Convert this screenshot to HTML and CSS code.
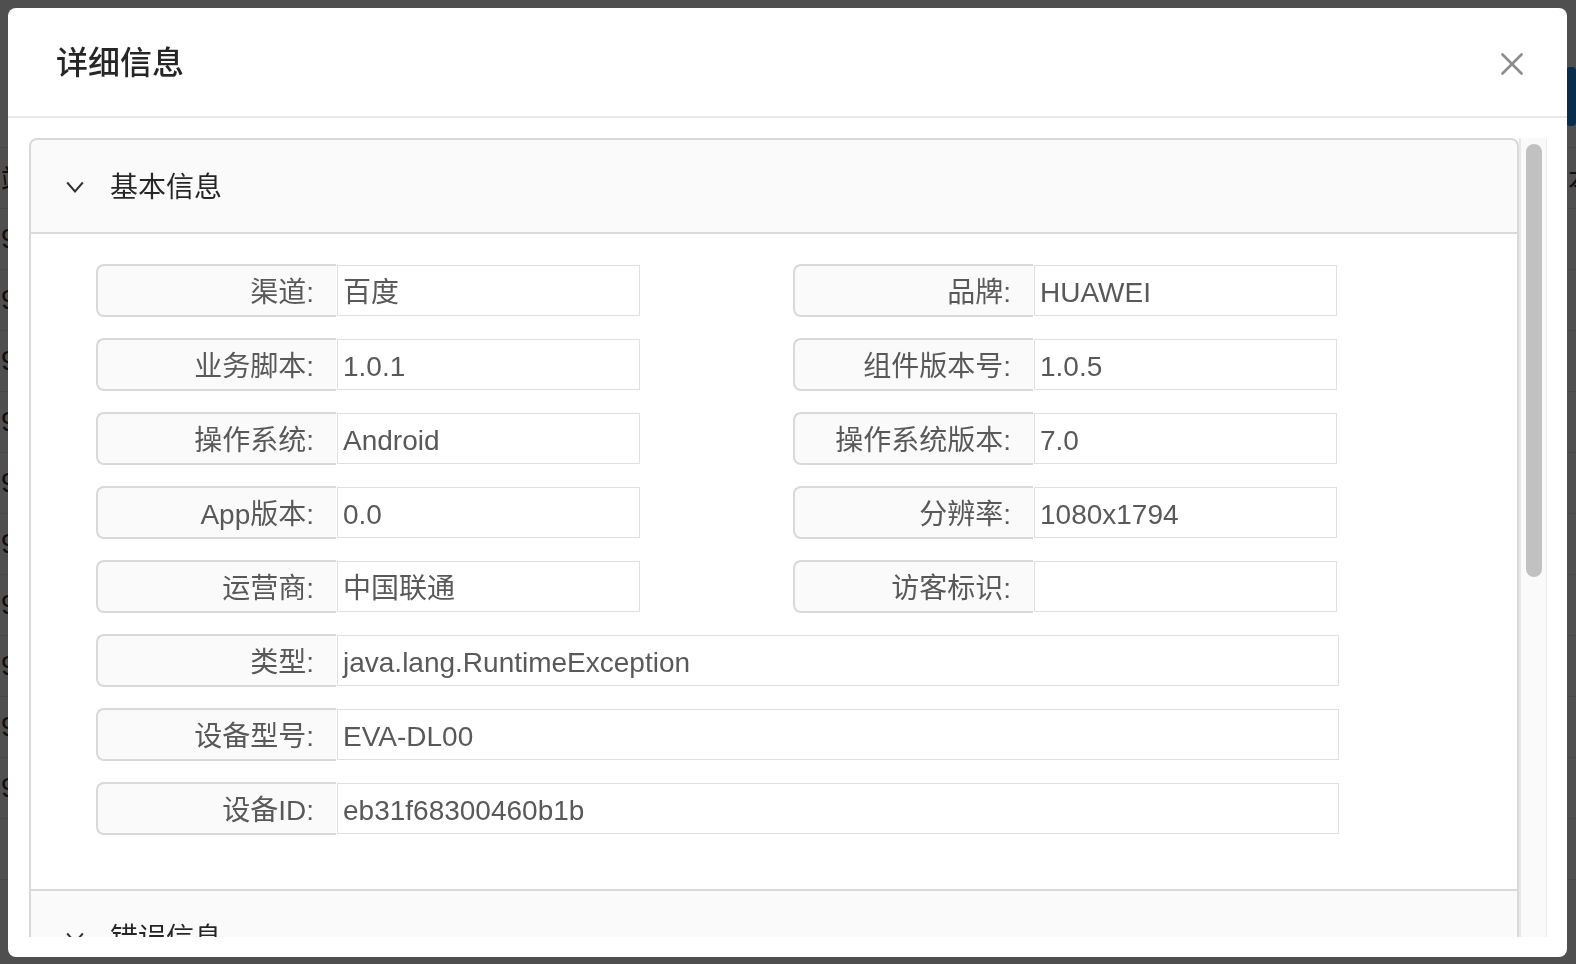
FILE: index.html
```html
<!DOCTYPE html>
<html lang="zh-CN">
<head>
<meta charset="utf-8">
<title>详细信息</title>
<link rel="stylesheet" href="styles.css">
</head>
<body>
<div class="page">
  <div class="page-toolbar"><span class="page-btn"></span></div>
  <div class="page-row"><span>端</span><span>本</span></div>
  <div class="page-row"><span>9</span><span></span></div>
  <div class="page-row"><span>9</span><span></span></div>
  <div class="page-row"><span>9</span><span></span></div>
  <div class="page-row"><span>9</span><span></span></div>
  <div class="page-row"><span>9</span><span></span></div>
  <div class="page-row"><span>9</span><span></span></div>
  <div class="page-row"><span>9</span><span></span></div>
  <div class="page-row"><span>9</span><span></span></div>
  <div class="page-row"><span>9</span><span></span></div>
  <div class="page-row"><span>9</span><span></span></div>
  <div class="page-row"><span></span><span></span></div>
</div>

<div class="mask"></div>

<div class="modal-wrap">
  <div class="modal">
    <div class="modal-header">
      <div class="modal-title">详细信息</div>
      <button class="modal-close" type="button" aria-label="关闭">
        <svg viewBox="0 0 22 22" width="22" height="22"><path d="M1.5 1.5L20.5 20.5M20.5 1.5L1.5 20.5" stroke="#8c8c8c" stroke-width="2.6" fill="none" stroke-linecap="round"/></svg>
      </button>
    </div>
    <div class="modal-body">
      <div class="scroller">
        <div class="collapse">
          <div class="collapse-item">
            <div class="collapse-header">
              <svg class="arrow" viewBox="0 0 18 12"><polyline points="1.2,1.5 9,10.5 16.8,1.5" fill="none" stroke="#333" stroke-width="2"/></svg>
              <span>基本信息</span>
            </div>
            <div class="collapse-content">
              <div class="info-grid">
                <div class="field"><span class="field-label">渠道:</span><span class="field-value">百度</span></div>
                <div class="field"><span class="field-label">品牌:</span><span class="field-value">HUAWEI</span></div>
                <div class="field"><span class="field-label">业务脚本:</span><span class="field-value">1.0.1</span></div>
                <div class="field"><span class="field-label">组件版本号:</span><span class="field-value">1.0.5</span></div>
                <div class="field"><span class="field-label">操作系统:</span><span class="field-value">Android</span></div>
                <div class="field"><span class="field-label">操作系统版本:</span><span class="field-value">7.0</span></div>
                <div class="field"><span class="field-label">App版本:</span><span class="field-value">0.0</span></div>
                <div class="field"><span class="field-label">分辨率:</span><span class="field-value">1080x1794</span></div>
                <div class="field"><span class="field-label">运营商:</span><span class="field-value">中国联通</span></div>
                <div class="field"><span class="field-label">访客标识:</span><span class="field-value"></span></div>
                <div class="field field-full"><span class="field-label">类型:</span><span class="field-value">java.lang.RuntimeException</span></div>
                <div class="field field-full"><span class="field-label">设备型号:</span><span class="field-value">EVA-DL00</span></div>
                <div class="field field-full"><span class="field-label">设备ID:</span><span class="field-value">eb31f68300460b1b</span></div>
              </div>
            </div>
          </div>
          <div class="collapse-item">
            <div class="collapse-header">
              <svg class="arrow" viewBox="0 0 18 12"><polyline points="1.2,1.5 9,10.5 16.8,1.5" fill="none" stroke="#333" stroke-width="2"/></svg>
              <span>错误信息</span>
            </div>
            <div class="collapse-content error-content">
<pre class="stack">java.lang.RuntimeException: Unable to start activity
    at android.app.ActivityThread.performLaunchActivity(ActivityThread.java:2665)
    at android.app.ActivityThread.handleLaunchActivity(ActivityThread.java:2726)
    at android.os.Handler.dispatchMessage(Handler.java:102)
    at android.os.Looper.loop(Looper.java:154)
    at android.app.ActivityThread.main(ActivityThread.java:6119)</pre>
            </div>
          </div>
        </div>
      </div>
      <div class="scrollbar"><div class="scrollbar-thumb"></div></div>
    </div>
  </div>
</div>
</body>
</html>
```

FILE: styles.css
```css
html, body {
  margin: 0;
  height: 100%;
}

body {
  font-family: "Liberation Sans", "Noto Sans CJK SC", sans-serif;
  background: #ffffff;
  overflow: hidden;
}

/* page behind the dialog */
.page {
  height: 964px;
  overflow: hidden;
}

.page-toolbar {
  height: 148px;
  box-sizing: border-box;
  border-bottom: 1px solid #e8e8e8;
  display: flex;
  align-items: flex-start;
  padding: 67px 0 0 1566px;
}

.page-btn {
  width: 80px;
  height: 59px;
  background: #1890ff;
  border-radius: 4px;
}

.page-row {
  display: grid;
  grid-template-columns: 1567px 1fr;
  align-items: center;
  height: 60px;
  border-bottom: 1px solid #e8e8e8;
  font-size: 28px;
  color: #333;
}

.page-row span {
  padding-left: 1px;
}

/* overlay */
.mask {
  position: fixed;
  inset: 0;
  background: rgba(0, 0, 0, 0.69);
}

.modal-wrap {
  position: fixed;
  inset: 0;
  padding: 8px 9px 7px 8px;
  display: flex;
}

.modal {
  flex: 1;
  display: flex;
  flex-direction: column;
  background: #ffffff;
  border-radius: 8px;
  overflow: hidden;
}

.modal-header {
  display: flex;
  align-items: center;
  justify-content: space-between;
  padding: 33px 44px 31px 48px;
  border-bottom: 2px solid #e8e8e8;
}

.modal-title {
  font-size: 32px;
  line-height: 44px;
  font-weight: 500;
  color: rgba(0, 0, 0, 0.85);
}

.modal-close {
  border: 0;
  background: none;
  padding: 0;
  margin-top: 2px;
  width: 22px;
  height: 22px;
  display: flex;
  cursor: pointer;
}

.modal-body {
  flex: 1;
  min-height: 0;
  display: flex;
  padding: 20px 20px 20px 21px;
}

.scroller {
  flex: 1;
  min-width: 0;
  overflow: hidden;
}

.scrollbar {
  width: 28px;
  flex: none;
  box-sizing: border-box;
  background: #fafafa;
  border-left: 2px solid #e8e8e8;
  border-right: 1px solid #ededed;
  padding: 6px 4px 0 5px;
}

.scrollbar-thumb {
  height: 433px;
  background: #c1c1c1;
  border-radius: 8px;
}

/* collapse */
.collapse {
  border: 2px solid #d9d9d9;
  border-radius: 8px;
  background: #fafafa;
}

.collapse-item {
  border-bottom: 2px solid #d9d9d9;
}

.collapse-item:last-child {
  border-bottom: 0;
}

.collapse-header {
  display: flex;
  align-items: center;
  padding: 26px 32px 22px 35px;
  font-size: 28px;
  line-height: 44px;
  color: rgba(0, 0, 0, 0.85);
}

.arrow {
  width: 18px;
  height: 12px;
  margin-right: 26px;
  margin-top: -2px;
  flex: none;
}

.collapse-content {
  background: #ffffff;
  border-top: 2px solid #d9d9d9;
  padding: 30px 32px 33px 65px;
}

.info-grid {
  display: grid;
  grid-template-columns: 544px 544px;
  column-gap: 153px;
  row-gap: 21px;
  padding-bottom: 21px;
}

.field {
  display: flex;
  height: 53px;
  font-size: 28px;
  line-height: 36px;
  color: #595959;
}

.field-full {
  grid-column: 1 / -1;
  margin-right: -2px;
}

.field-label {
  width: 240px;
  flex: none;
  box-sizing: border-box;
  background: #fafafa;
  border: 2px solid #d9d9d9;
  border-right: 0;
  border-radius: 8px 0 0 8px;
  display: flex;
  align-items: center;
  justify-content: flex-end;
  padding: 4px 22px 0 0;
}

.field-value {
  flex: 1;
  margin: 1px 0 1px 1px;
  border: 1px solid #e0e0e0;
  display: flex;
  align-items: center;
  padding: 4px 0 0 5px;
  white-space: nowrap;
}

.error-content {
  padding: 32px;
}

.stack {
  margin: 0;
  height: 522px;
  overflow: hidden;
  font-family: "Liberation Mono", monospace;
  font-size: 22px;
  line-height: 36px;
  color: #595959;
  white-space: pre-wrap;
}
```
